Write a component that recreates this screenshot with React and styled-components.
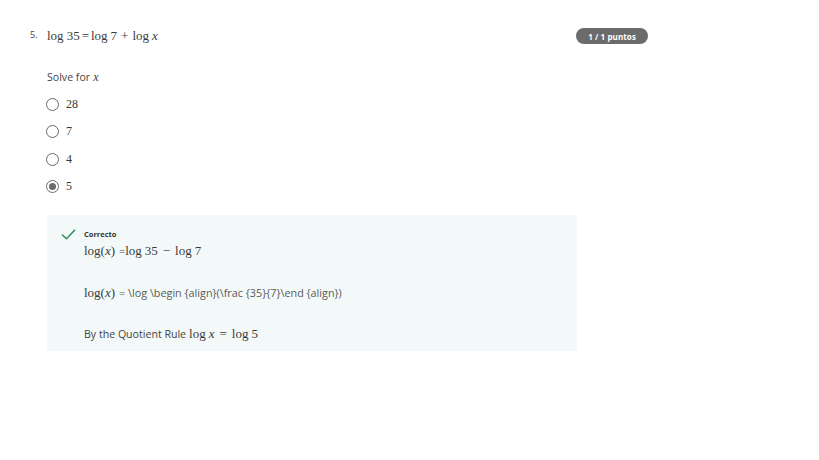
import styled, { createGlobalStyle } from "styled-components";

// ── Global ─────────────────────────────────────────────────────

const Global = createGlobalStyle`
   html, body {
      margin: 0;
      padding: 0;
      background: #ffffff;
      font-family: "Open Sans", "Liberation Sans", sans-serif;
      color: #3c3c3c;
   }
`;

// ── Styled ─────────────────────────────────────────────────────

const Page = styled.div`
   width: 819px;
   height: 460px;
   box-sizing: border-box;
   padding: 26px 0 0 30px;
`;

const Head = styled.div`
   display: flex;
   align-items: center;
   width: 618px;
   height: 20px;
`;

const Num = styled.span`
   width: 17px;
   font-size: 9px;
   color: #444;
   margin-top: -3px;
`;

const Question = styled.div`
   flex: 1;
   display: flex;
   align-items: center;
`;

const Badge = styled.span`
   height: 16px;
   padding: 0 12px;
   border-radius: 8px;
   background: #6b6b6b;
   color: #ffffff;
   font-size: 8px;
   font-weight: 700;
   display: flex;
   align-items: center;
   letter-spacing: 0.1px;
`;

const Math = styled.span`
   font-family: "Liberation Serif", "DejaVu Serif", serif;
   font-size: ${({ $size }) => $size || 13}px;
   color: #3a3a3a;
   white-space: pre;
`;

const Var = styled.i`
   font-family: "Liberation Serif", "DejaVu Serif", serif;
   font-style: italic;
`;

const Op = styled.span`
   margin: 0 ${({ $gap }) => $gap ?? 3}px;
`;

const Body = styled.div`
   padding-left: 17px;
`;

const Prompt = styled.div`
   margin-top: 23px;
   font-size: 10.6px;
   color: #444;
   height: 16px;
   display: flex;
   align-items: center;
   gap: 3px;
`;

const Options = styled.div`
   display: flex;
   flex-direction: column;
   gap: 11.5px;
   margin-top: 11px;
`;

const Option = styled.label`
   display: flex;
   align-items: center;
   gap: 7px;
   height: 16px;
   margin-left: -1px;
`;

const Radio = styled.span`
   width: 11px;
   height: 11px;
   border-radius: 50%;
   border: 1.2px solid #6a6a6a;
   display: flex;
   align-items: center;
   justify-content: center;

   &::after {
      content: "";
      width: 7px;
      height: 7px;
      border-radius: 50%;
      background: ${({ $checked }) => ($checked ? "#6a6a6a" : "transparent")};
   }
`;

const Feedback = styled.div`
   margin-top: 20px;
   width: 530px;
   height: 136px;
   box-sizing: border-box;
   background: #f3f9f8;
   padding: 12px 0 0 14px;
   display: flex;
   gap: 8px;
`;

const Check = styled.svg`
   width: 15px;
   height: 15px;
   flex-shrink: 0;
`;

const FbBody = styled.div`
   display: flex;
   flex-direction: column;
`;

const Verdict = styled.div`
   font-size: 7.5px;
   font-weight: 700;
   color: #333;
   height: 12px;
   display: flex;
   align-items: center;
   margin-top: 1px;
`;

const Line = styled.div`
   display: flex;
   align-items: center;
   height: 18px;
   margin-top: ${({ $top }) => $top || 0}px;
   font-size: 10.6px;
   color: #444;
`;

const Raw = styled.span`
   font-size: 10.8px;
   color: #5a5a5a;
   margin-left: 4px;
`;

// ── Component ─────────────────────────────────────────────────

const OPTIONS = ["28", "7", "4", "5"];

const Log = ({ children }) => (
   <>
      log<span style={{ marginLeft: 3 }}>{children}</span>
   </>
);

export default function App() {
   return (
      <>
         <Global />
         <Page>
            <Head>
               <Num>5.</Num>
               <Question>
                  <Math>
                     <Log>35</Log>
                     <span style={{ margin: "0 2px" }}>=</span>
                     <Log>7</Log>
                     <Op $gap={4}>+</Op>
                     <Log>
                        <Var>x</Var>
                     </Log>
                  </Math>
               </Question>
               <Badge>1 / 1 puntos</Badge>
            </Head>

            <Body>
               <Prompt>
                  Solve for
                  <Math $size={12}>
                     <Var>x</Var>
                  </Math>
               </Prompt>

               <Options>
                  {OPTIONS.map((o, i) => (
                     <Option key={o}>
                        <Radio $checked={i === 3} />
                        <Math $size={12}>{o}</Math>
                     </Option>
                  ))}
               </Options>

               <Feedback>
                  <Check viewBox="0 0 16 16">
                     <path
                        d="M1.5 8.5 L5.8 12.5 L14.5 3.5"
                        fill="none"
                        stroke="#2e8b57"
                        strokeWidth="1.6"
                        strokeLinecap="round"
                        strokeLinejoin="round"
                     />
                  </Check>
                  <FbBody>
                     <Verdict>Correcto</Verdict>
                     <Line $top={2}>
                        <Math>
                           log(<Var>x</Var>)
                        </Math>
                        <span style={{ margin: "0 0 0 4px" }}>=</span>
                        <Math>
                           <Log>35</Log>
                           <Op $gap={5}>−</Op>
                           <Log>7</Log>
                        </Math>
                     </Line>
                     <Line $top={24}>
                        <Math>
                           log(<Var>x</Var>)
                        </Math>
                        <Raw>
                           = \log \begin {"{align}"}(\frac {"{35}{7}"}\end {"{align}"})
                        </Raw>
                     </Line>
                     <Line $top={23}>
                        <span style={{ marginRight: 3 }}>By the Quotient Rule</span>
                        <Math>
                           <Log>
                              <Var>x</Var>
                           </Log>
                           <Op $gap={5}>=</Op>
                           <Log>5</Log>
                        </Math>
                     </Line>
                  </FbBody>
               </Feedback>
            </Body>
         </Page>
      </>
   );
}
